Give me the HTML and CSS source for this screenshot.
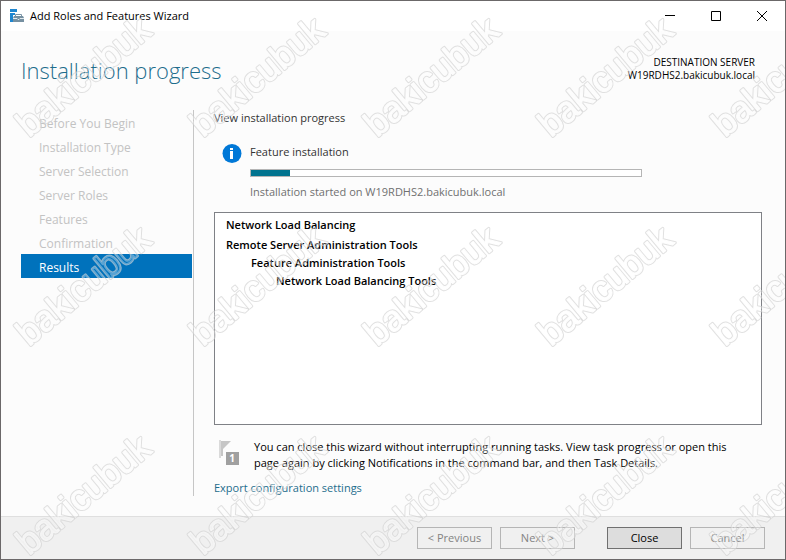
FILE: index.html
```
<!DOCTYPE html>
<html lang="en">
<head>
    <meta charset="UTF-8">
    <title>Add Roles and Features Wizard</title>
    <link rel="stylesheet" href="styles.css">
</head>
<body>
    <div class="window">
        <div class="titlebar">
            <svg class="app-icon" width="16" height="16" viewBox="0 0 16 16">
                <path d="M1 1h7v3H1zM1 5h5v2H4v7H1z" fill="#1f86cf"/>
                <path d="M6.500 8V6.500h6V8" fill="none" stroke="#7b95a6"/>
                <path d="M5 8h9l1 2v4H4v-4z" fill="#7690a1"/>
                <path d="M4 10.500h4l1 1h1l1-1h4" fill="none" stroke="#e3eaee"/>
            </svg>
            <span class="title">Add Roles and Features Wizard</span>
            <button class="win-btn" aria-label="Minimize">
                <svg width="12" height="12" viewBox="0 0 12 12"><path d="M1 5.500h10"/></svg>
            </button>
            <button class="win-btn" aria-label="Maximize">
                <svg width="12" height="12" viewBox="0 0 12 12"><path d="M1.500 1.500h9v9h-9z"/></svg>
            </button>
            <button class="win-btn" aria-label="Close window">
                <svg width="12" height="12" viewBox="0 0 12 12"><path d="M1 1l10 10M11 1L1 11"/></svg>
            </button>
        </div>

        <div class="header">
            <h1>Installation progress</h1>
            <div class="server">
                <p>DESTINATION SERVER</p>
                <p>W19RDHS2.bakicubuk.local</p>
            </div>
        </div>

        <div class="content">
            <ul class="steps">
                <li>Before You Begin</li>
                <li>Installation Type</li>
                <li>Server Selection</li>
                <li>Server Roles</li>
                <li>Features</li>
                <li>Confirmation</li>
                <li class="select">Results</li>
            </ul>
            <div class="main">
                <p class="caption">View installation progress</p>
                <div class="status">
                    <svg class="info-icon" width="20" height="20" viewBox="0 0 20 20">
                        <circle cx="10" cy="9.500" r="9.500" fill="#0078d7"/>
                        <path d="M8 4h3v2H8zM8 7h3v8H8z" fill="#fff"/>
                    </svg>
                    <div class="status-body">
                        <p id="task">Feature installation</p>
                        <div class="progress" role="progressbar" aria-labelledby="task" aria-valuenow="10">
                            <div class="bar" style="width: 10%"></div>
                        </div>
                        <p class="started">Installation started on W19RDHS2.bakicubuk.local</p>
                    </div>
                </div>
                <ul class="features">
                    <li>Network Load Balancing</li>
                    <li>Remote Server Administration Tools
                        <ul>
                            <li>Feature Administration Tools
                                <ul>
                                    <li>Network Load Balancing Tools</li>
                                </ul>
                            </li>
                        </ul>
                    </li>
                </ul>
                <div class="note">
                    <svg class="flag-icon" width="24" height="28" viewBox="0 0 24 28">
                        <path d="M1 1h2v18H1z" fill="#dadada"/>
                        <path d="M3 2h10L5 10v7H3z" fill="#c6c6c6"/>
                        <path d="M8 13h13v13H8z" fill="#a0a0a0"/>
                        <text x="14" y="23" class="flag-count">1</text>
                    </svg>
                    <p>You can close this wizard without interrupting running tasks. View task progress or open this page again by clicking Notifications in the command bar, and then Task Details.</p>
                </div>
                <a class="export" href="#">Export configuration settings</a>
            </div>
        </div>

        <div class="footer">
            <button class="btn" disabled>&lt; Previous</button>
            <button class="btn" disabled>Next &gt;</button>
            <button class="btn btn-default">Close</button>
            <button class="btn" disabled>Cancel</button>
        </div>

        <svg class="watermark" width="100%" height="100%" aria-hidden="true">
            <defs>
                <!-- leaves only the outer edge of the letters -->
                <mask id="ring" maskUnits="userSpaceOnUse" x="-10" y="-40" width="190" height="60">
                    <rect x="-10" y="-40" width="190" height="60" fill="#fff"/>
                    <text class="mark-cut">bakicubuk</text>
                </mask>
                <pattern id="mark" width="174" height="209" patternUnits="userSpaceOnUse">
                    <g transform="translate(28 137) rotate(-40)">
                        <text class="mark-line">bakicubuk</text>
                        <g mask="url(#ring)">
                            <text class="mark-edge">bakicubuk</text>
                        </g>
                    </g>
                </pattern>
            </defs>
            <rect width="100%" height="100%" fill="url(#mark)"/>
        </svg>
    </div>
</body>
</html>
```

FILE: styles.css
```
*{
    margin: 0;
    padding: 0;
    box-sizing: border-box;
}
ul,li{
    list-style: none;
}
body{
    font: 11px/16px "Open Sans", "Noto Sans", sans-serif;
    color: #000;
}
button{
    font: inherit;
}
.window{
    position: relative;
    display: flex;
    flex-direction: column;
    min-height: 100vh;
    border: 1px solid #6b6869;
    background: #fcfcfc;
    overflow: hidden;
}
/* title bar */
.titlebar{
    display: flex;
    align-items: center;
    height: 30px;
    padding-left: 8px;
    background: #fff;
}
.title{
    flex: 1;
    padding-left: 5px;
}
.win-btn{
    width: 46px;
    height: 30px;
    border: 0;
    background: none;
}
.win-btn svg{
    display: block;
    margin: 0 auto;
    fill: none;
    stroke: #000;
}
/* header */
.header{
    display: flex;
    justify-content: space-between;
    padding: 23px 30px 0 20px;
    height: 79px;
}
h1{
    font: 300 22px/32px "Open Sans", "Noto Sans", sans-serif;
    color: #1e6d8c;
}
.server{
    padding-top: 2px;
    font-size: 10px;
    line-height: 13px;
    text-align: right;
}
/* content */
.content{
    flex: 1;
    display: flex;
    padding: 0 23px 20px 20px;
}
.steps{
    width: 173px;
    padding-right: 1px;
    border-right: 1px solid #c6c6c6;
    font-size: 12px;
    color: #c3c3c3;
}
.steps li{
    height: 24px;
    padding-left: 18px;
    line-height: 28px;
}
.steps .select{
    color: #fff;
    background: #0072bc;
}
.main{
    flex: 1;
    display: flex;
    flex-direction: column;
    padding-left: 20px;
}
.caption{
    color: #333;
}
.status{
    display: flex;
    gap: 8px;
    padding: 18px 120px 12px 8px;
}
.status-body{
    flex: 1;
    color: #333;
}
.progress{
    height: 8px;
    margin: 9px 0 7px;
    border: 1px solid #b5b5b5;
    background: #fff;
}
.bar{
    height: 100%;
    background: #00738f;
}
.started{
    color: #707070;
}
.features{
    flex: 1;
    padding: 3px 11px;
    border: 1px solid #7f8186;
    background: #fff;
    font-weight: 600;
    line-height: 18px;
}
.features > li + li{
    margin-top: 2px;
}
.features ul{
    padding-left: 25px;
}
.note{
    display: flex;
    gap: 12px;
    padding: 14px 16px 9px 4px;
}
.note svg{
    flex: none;
}
.flag-count{
    font-size: 10px;
    font-weight: bold;
    fill: #fff;
    text-anchor: middle;
}
.export{
    color: #1e6d8c;
    text-decoration: none;
}
/* footer */
.footer{
    display: flex;
    justify-content: flex-end;
    gap: 8px;
    padding: 10px 20px;
    border-top: 1px solid #dfdfdf;
    background: #f0f0f0;
}
.btn{
    width: 75px;
    height: 22px;
    border: 1px solid #b5b5b5;
    color: #838383;
    background: #f0f0f0;
}
.btn-default{
    margin-left: 24px;
    border-color: #707070;
    color: #000;
    background: #ddd;
}
/* repeated mark over the whole window */
.watermark{
    position: absolute;
    top: 0;
    left: 0;
    pointer-events: none;
}
.watermark text{
    font: 36px "Liberation Sans", Arial, sans-serif;
    fill: none;
    stroke-linejoin: round;
}
.watermark .mark-cut{
    fill: #000;
    stroke: #000;
    stroke-width: 1px;
}
.mark-edge{
    stroke: rgba(205,205,205,.6);
    stroke-width: 3px;
}
.mark-line{
    stroke: rgba(255,255,255,.35);
    stroke-width: 2px;
}
```
